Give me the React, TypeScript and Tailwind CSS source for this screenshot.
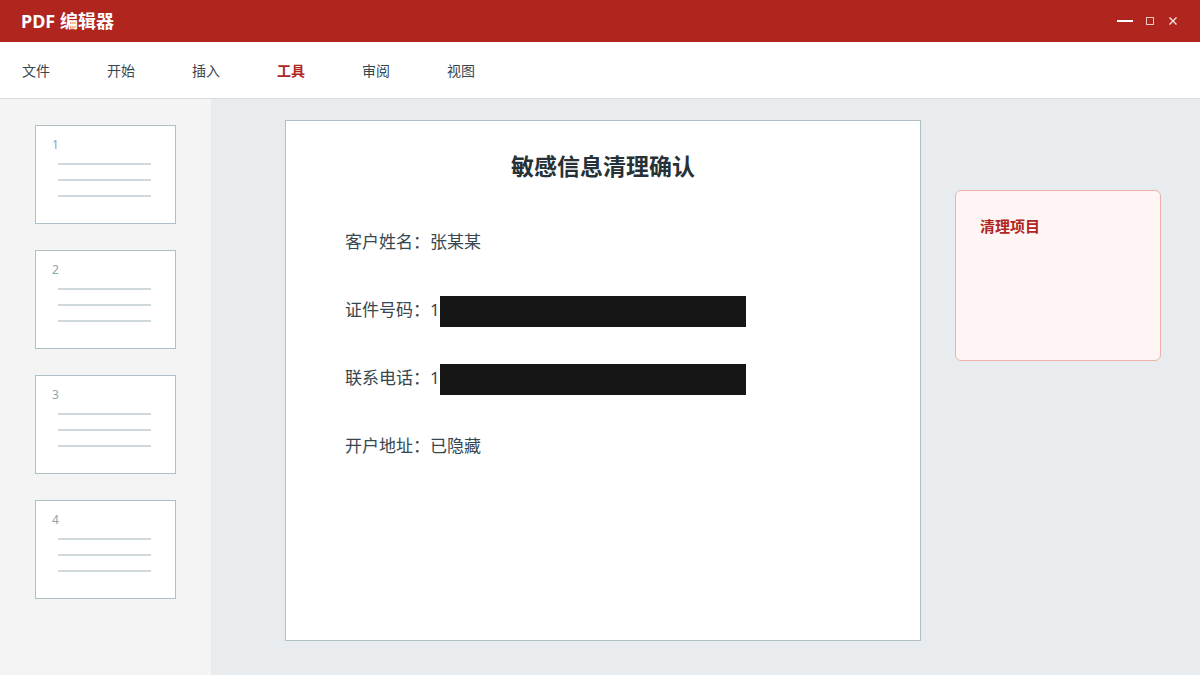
import React from "react";

const menus = ["文件", "开始", "插入", "工具", "审阅", "视图"];
const pages = [1, 2, 3, 4];

function Thumb({ n }: { n: number }) {
  return (
    <div className="relative h-[99px] w-[141px] border border-[#b0bec5] bg-white">
      <div className="absolute left-[16px] top-[11px] text-[12px] leading-[16px] text-[#90a4ae]">{n}</div>
      <div className="absolute left-[22px] top-[37px] flex w-[93px] flex-col gap-[14px]">
        <div className="h-[2px] bg-[#cfd8dc]" />
        <div className="h-[2px] bg-[#cfd8dc]" />
        <div className="h-[2px] bg-[#cfd8dc]" />
      </div>
    </div>
  );
}

function Field({ label, value, masked }: { label: string; value: string; masked?: boolean }) {
  return (
    <div className="flex h-[33px] items-start text-[17px] leading-[28px] text-[#37474f]">
      <span>{label}：</span>
      <span>{value}</span>
      {masked && <span className="h-[31px] w-[306px] bg-[#161616]" />}
    </div>
  );
}

export default function App() {
  return (
    <div
      className="flex h-[675px] w-[1200px] flex-col overflow-hidden bg-[#e8ecef]"
      style={{ fontFamily: '"Noto Sans", "Noto Sans CJK SC", sans-serif' }}
    >
      {/* title bar */}
      <div className="flex h-[42px] shrink-0 items-center justify-between bg-[#b0261f] pl-[21px] pr-[23px]">
        <div className="text-[18px] font-bold leading-none text-white">PDF 编辑器</div>
        <div className="flex items-center">
          <div className="h-[2px] w-[16px] bg-white" />
          <div className="ml-[13px] h-[8px] w-[8px] border border-[#f4c7c3]" />
          <svg className="ml-[15px]" width="8" height="8" viewBox="0 0 8 8">
            <path d="M0.5 0.5 L7.5 7.5 M7.5 0.5 L0.5 7.5" stroke="#fbe3e1" strokeWidth="1.4" />
          </svg>
        </div>
      </div>

      {/* menu bar */}
      <div className="flex h-[57px] shrink-0 items-center gap-[57px] border-b border-[#d5dde2] bg-white pl-[22px] pt-[1px]">
        {menus.map((m) => (
          <div
            key={m}
            className={
              m === "工具"
                ? "text-[14px] font-bold text-[#b0261f]"
                : "text-[14px] text-[#37474f]"
            }
          >
            {m}
          </div>
        ))}
      </div>

      <div className="flex min-h-0 flex-1">
        {/* page thumbnails */}
        <div className="flex w-[211px] shrink-0 flex-col gap-[26px] bg-[#f4f4f4] pl-[35px] pt-[26px]">
          {pages.map((n) => (
            <Thumb key={n} n={n} />
          ))}
        </div>

        {/* document area */}
        <div className="flex flex-1 items-start pl-[74px] pt-[21px]">
          <div className="flex h-[521px] w-[636px] shrink-0 flex-col border border-[#b0bec5] bg-white">
            <div className="pt-[29px] text-center text-[23px] font-bold leading-[32px] text-[#263238]">
              敏感信息清理确认
            </div>
            <div className="mt-[46px] flex flex-col gap-[35px] pl-[59px]">
              <Field label="客户姓名" value="张某某" />
              <Field label="证件号码" value="1" masked />
              <Field label="联系电话" value="1" masked />
              <Field label="开户地址" value="已隐藏" />
            </div>
          </div>

          <div className="ml-[34px] mt-[70px] h-[171px] w-[206px] shrink-0 rounded-[6px] border border-[#eeb2a8] bg-[#fff5f4] pl-[24px] pt-[24px]">
            <div className="text-[15px] font-bold leading-[22px] text-[#b0261f]">清理项目</div>
          </div>
        </div>
      </div>
    </div>
  );
}
